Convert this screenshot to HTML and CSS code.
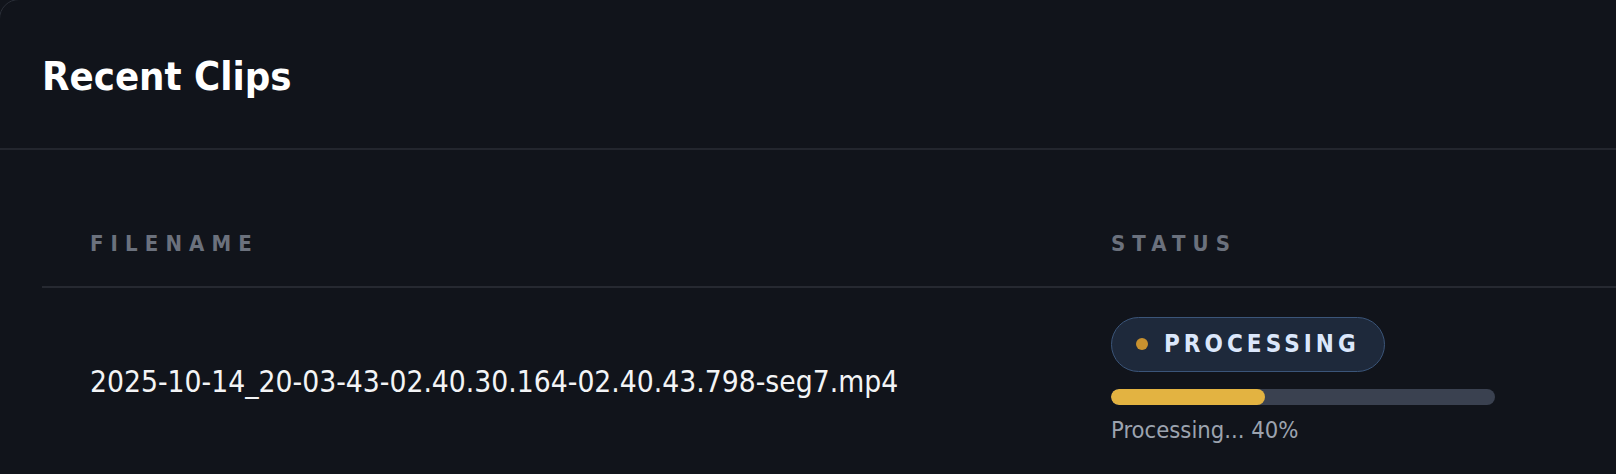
FILE: index.html
```html
<!DOCTYPE html>
<html lang="en">
<head>
<meta charset="utf-8">
<title>Recent Clips</title>
<link rel="stylesheet" href="styles.css">
</head>
<body>
  <section class="card">
    <header class="card-header">
      <h2 class="card-title">Recent Clips</h2>
    </header>
    <div class="card-body">
      <table class="clips">
        <thead>
          <tr>
            <th class="col-name">Filename</th>
            <th class="col-status">Status</th>
          </tr>
        </thead>
        <tbody>
          <tr>
            <td class="filename">2025-10-14_20-03-43-02.40.30.164-02.40.43.798-seg7.mp4</td>
            <td class="status">
              <span class="badge"><span class="badge-dot"></span><span class="badge-text">Processing</span></span>
              <div class="progress"><div class="progress-fill" style="width: 40%"></div></div>
              <div class="progress-label">Processing... 40%</div>
            </td>
          </tr>
        </tbody>
      </table>
    </div>
  </section>
</body>
</html>
```

FILE: styles.css
```css
html, body {
  margin: 0;
  padding: 0;
  background: #11141b;
  overflow: hidden;
}

body {
  font-family: "DejaVu Sans Condensed", "DejaVu Sans", sans-serif;
  font-stretch: condensed;
  color: #f3f4f6;
  width: 1616px;
  height: 474px;
}

.card {
  margin: -1px 0 0 -1px;
  width: 1700px;
  background: #11141b;
  border: 1px solid #2b2f38;
  border-radius: 20px;
  min-height: 600px;
}

.card-header {
  padding: 53px 42px 48px 42px;
  border-bottom: 2px solid #23262e;
}

.card-title {
  margin: 0;
  font-size: 39.7px;
  line-height: 46.8px;
  font-weight: 700;
  color: #ffffff;
}

.card-body {
  padding: 50px 0 0 42px;
}

.clips {
  width: 100%;
  border-collapse: collapse;
}

.clips th {
  text-align: left;
  font-size: 22px;
  line-height: 1.5;
  font-weight: 700;
  text-transform: uppercase;
  letter-spacing: 7.1px;
  color: #6b717d;
  padding: 27px 48px 26px 48px;
  border-bottom: 2px solid #262931;
}

.clips th.col-name {
  width: 925px;
}

.clips td {
  padding: 29px 48px 29px 48px;
  vertical-align: middle;
}

.filename {
  font-size: 29.7px;
  line-height: 1.5;
  color: #f3f4f6;
}

.badge {
  display: inline-flex;
  align-items: center;
  box-sizing: border-box;
  height: 55px;
  padding: 0 24px 0 24px;
  background: #1e293b;
  border: 1px solid #3b5579;
  border-radius: 28px;
}

.badge-dot {
  width: 12px;
  height: 12px;
  border-radius: 50%;
  background: #c8912f;
  margin-right: 16px;
}

.badge-text {
  font-size: 24px;
  line-height: 1;
  font-weight: 700;
  text-transform: uppercase;
  letter-spacing: 4.05px;
  color: #dbe7fb;
}

.progress {
  margin-top: 17px;
  width: 384px;
  height: 16px;
  background: #3a4150;
  border-radius: 8px;
  overflow: hidden;
}

.progress-fill {
  height: 100%;
  background: #e3b341;
  border-radius: 8px;
}

.progress-label {
  margin-top: 7px;
  font-size: 23.6px;
  line-height: 36px;
  color: #9ca3af;
}
```
